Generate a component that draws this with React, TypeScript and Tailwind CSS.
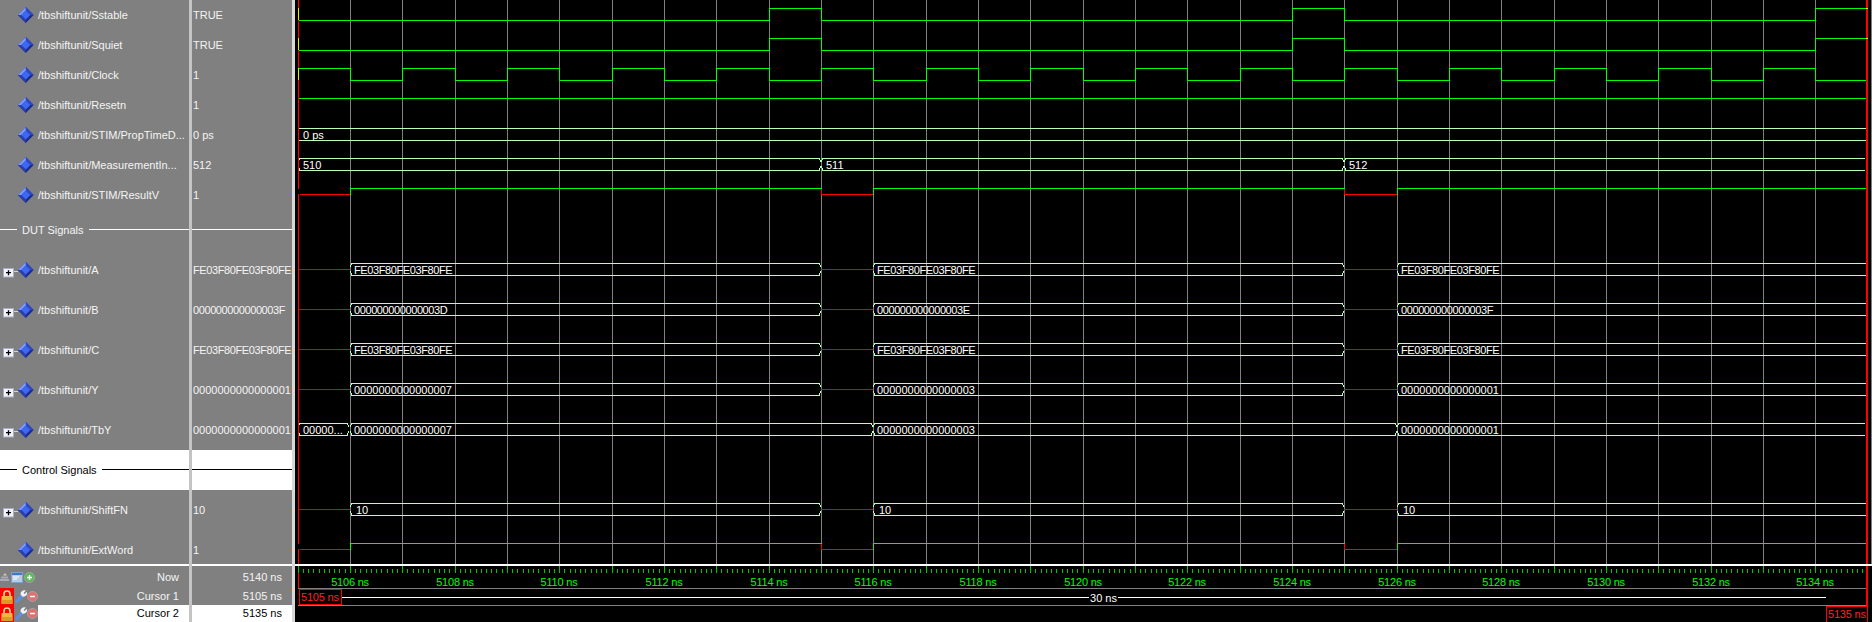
import React from "react";

type Row = { name?: string; value?: string; h: number; expand?: boolean; group?: string; light?: boolean };

const rows: Row[] = [
  { name: "/tbshiftunit/Sstable", value: "TRUE", h: 30 },
  { name: "/tbshiftunit/Squiet", value: "TRUE", h: 30 },
  { name: "/tbshiftunit/Clock", value: "1", h: 30 },
  { name: "/tbshiftunit/Resetn", value: "1", h: 30 },
  { name: "/tbshiftunit/STIM/PropTimeD...", value: "0 ps", h: 30 },
  { name: "/tbshiftunit/MeasurementIn...", value: "512", h: 30 },
  { name: "/tbshiftunit/STIM/ResultV", value: "1", h: 30 },
  { group: "DUT Signals", h: 40 },
  { name: "/tbshiftunit/A", value: "FE03F80FE03F80FE", h: 40, expand: true },
  { name: "/tbshiftunit/B", value: "000000000000003F", h: 40, expand: true },
  { name: "/tbshiftunit/C", value: "FE03F80FE03F80FE", h: 40, expand: true },
  { name: "/tbshiftunit/Y", value: "0000000000000001", h: 40, expand: true },
  { name: "/tbshiftunit/TbY", value: "0000000000000001", h: 40, expand: true },
  { group: "Control Signals", h: 40, light: true },
  { name: "/tbshiftunit/ShiftFN", value: "10", h: 40, expand: true },
  { name: "/tbshiftunit/ExtWord", value: "1", h: 40 },
];

const FONT = "font-['Liberation_Sans',sans-serif] text-[11px] leading-none";

function SignalIcon({ expand }: { expand?: boolean }) {
  return (
    <svg width="36" height="18" viewBox="0 0 36 18" className="shrink-0" shapeRendering="geometricPrecision">
      {expand && (
        <g>
          <path d="M13 10.5h5" stroke="#d4d4d4" />
          <rect x="3.5" y="7.5" width="10" height="8.5" fill="#f2f2fa" stroke="#a9acc8" />
          <path d="M6 11.7h5M8.5 9.3v5" stroke="#000" strokeWidth="1.3" />
        </g>
      )}
      <g transform="translate(0.3 0.5)">
        <polygon points="25.5,0.6 33.4,8.5 25.5,16.4 17.6,8.5" fill="#1c2c8c" />
        <polygon points="25.5,0.6 33.4,8.5 30,8.5 25.5,4" fill="#2f49c0" />
        <polygon points="25.5,0.6 25.5,4 21,8.5 17.6,8.5" fill="#7d9bff" />
        <polygon points="17.6,8.5 21,8.5 25.5,13 25.5,16.4" fill="#2b40b0" />
        <polygon points="25.5,4 30,8.5 25.5,13 21,8.5" fill="#3e68f2" />
      </g>
    </svg>
  );
}

function NameRow({ r }: { r: Row }) {
  if (r.group) {
    return (
      <div className={`flex items-center shrink-0 ${r.light ? "bg-white text-black" : "text-[#f4f4f4]"}`} style={{ height: r.h }}>
        <div className={`w-[17px] h-px mb-px ${r.light ? "bg-black" : "bg-white"}`} />
        <span className="px-[5px] pt-[1px] whitespace-nowrap">{r.group}</span>
        <div className={`flex-1 h-px mb-px ${r.light ? "bg-black" : "bg-white"}`} />
      </div>
    );
  }
  return (
    <div className="flex items-center shrink-0 text-[#f4f4f4]" style={{ height: r.h }}>
      <SignalIcon expand={r.expand} />
      <span className="ml-[2px] pt-[1px] whitespace-nowrap">{r.name}</span>
    </div>
  );
}

function ValueRow({ r }: { r: Row }) {
  if (r.group) {
    return (
      <div className={`flex items-center shrink-0 ${r.light ? "bg-white" : ""}`} style={{ height: r.h }}>
        <div className={`flex-1 h-px mb-px ${r.light ? "bg-black" : "bg-white"}`} />
      </div>
    );
  }
  const hex = /[A-F]/.test(r.value ?? "") && (r.value ?? "").length > 4;
  return (
    <div className="flex items-center shrink-0 pl-[1px] text-[#f4f4f4] whitespace-nowrap" style={{ height: r.h }}>
      <span className={`pt-[1px] ${hex ? "tracking-[-0.4px]" : ""}`}>{r.value}</span>
    </div>
  );
}

function Lock() {
  return (
    <svg width="14" height="16" viewBox="0 0 14 16">
      <path d="M4 8V5a3 3 0 0 1 6 0v3" fill="none" stroke="#f4d9a0" strokeWidth="1.6" />
      <rect x="1.5" y="7" width="11" height="8" rx="1" fill="#f0b840" />
      <rect x="1.5" y="11" width="11" height="4" fill="#d99a28" />
    </svg>
  );
}

function Wrench() {
  return (
    <svg width="12" height="13" viewBox="0 0 12 13">
      <path d="M1.7 11.3 7 6" stroke="#5f8fe0" strokeWidth="3.2" strokeLinecap="round" />
      <path d="M5.6 4.4A3.6 3.6 0 0 1 10.8.6L8.6 3l1 1L12 1.8a3.6 3.6 0 0 1-4.6 4.6z" fill="#eef2fb" />
    </svg>
  );
}

function Circle({ color, plus }: { color: string; plus?: boolean }) {
  return (
    <svg width="11" height="11" viewBox="0 0 11 11">
      <circle cx="5.5" cy="5.5" r="5" fill={color} stroke="#b5b5b5" strokeWidth="0.6" />
      <path d={plus ? "M3 5.5h5M5.5 3v5" : "M3 5.5h5"} stroke="#fff" strokeWidth="1.5" />
    </svg>
  );
}

function NowIcons() {
  return (
    <div className="flex items-center h-full">
      <svg width="10" height="11" viewBox="0 0 10 11">
        <path d="M0 8h9M1 5.5h7" stroke="#a8aab8" strokeWidth="2" />
        <path d="M3 3.5 5 1l2 2.5" fill="#c8c8d0" />
      </svg>
      <svg width="12" height="11" viewBox="0 0 12 11" className="ml-[1px]">
        <rect x="0.5" y="0.5" width="11" height="10" fill="#b6cdea" stroke="#7fa0cc" />
        <rect x="1" y="1" width="10" height="2" fill="#3f78c8" />
        <path d="M2 5h6M2 7h4" stroke="#fff" />
      </svg>
      <div className="ml-[1px] flex"><Circle color="#5fb85f" plus /></div>
    </div>
  );
}

const gx = (n: number) => (n >= 29 ? 1867 : Math.floor(350.45 + 52.33 * n));
const GREEN = "#00ff00";
const BUS = "#b8ffb8";
const RED = "#e80000";

function Line({ x1, y1, x2, y2, c, w = 1 }: { x1: number; y1: number; x2: number; y2: number; c: string; w?: number }) {
  const hx = x1 === x2 ? 0.5 : 0;
  const hy = y1 === y2 ? 0.5 : 0;
  return <line x1={x1 + hx} y1={y1 + hy} x2={x2 + hx} y2={y2 + hy} stroke={c} strokeWidth={w} />;
}

function Bus({ x1, x2, t, label, lx, open }: { x1: number; x2: number; t: number; label?: string; lx?: number; open?: boolean }) {
  const b = t + 12;
  const m = t + 6;
  const hex = label ? /[A-F]/.test(label) : false;
  let d = `M${x1 + 1.5} ${t}V${t + 2}M${x1 + 0.5} ${t + 2}V${t + 4}M${x1 + 1.5} ${b}V${b - 2}M${x1 + 0.5} ${b - 2}V${b - 4}`;
  if (!open) {
    d += `M${x2 - 1.5} ${t}V${t + 2}M${x2 - 0.5} ${t + 2}V${t + 4}M${x2 - 1.5} ${b}V${b - 2}M${x2 - 0.5} ${b - 2}V${b - 4}`;
  }
  return (
    <g>
      <Line x1={x1 + 1} y1={t} x2={x2 - 1} y2={t} c={BUS} />
      <Line x1={x1 + 1} y1={b} x2={x2 - 1} y2={b} c={BUS} />
      <path d={d} stroke={BUS} fill="none" />
      {label && (
        <text
          x={lx ?? x1 + 4}
          y={m + 5}
          fill="#ffffff"
          stroke="none"
          shapeRendering="auto"
          className={hex ? "tracking-[-0.4px]" : ""}
        >
          {label}
        </text>
      )}
    </g>
  );
}

function Waves() {
  const grid = Array.from({ length: 29 }, (_, i) => gx(i));
  const ticks: number[] = [];
  for (let i = 0; i <= 300; i++) {
    const x = 298.1 + i * 5.233;
    if (x < 1866) ticks.push(Math.floor(x));
  }
  const pulse = (hi: number, lo: number) => {
    let d = `M299 ${lo + 0.5}`;
    for (const n of [8, 18, 28]) {
      d += `H${gx(n) + 0.5}V${hi + 0.5}H${gx(n + 1) + 0.5}`;
      if (n < 28) d += `V${lo + 0.5}`;
    }
    return d;
  };
  let clock = `M299 68.5`;
  for (let n = 0; n < 29; n++) {
    const y = n % 2 === 0 ? 80.5 : 68.5;
    clock += `H${gx(n) + 0.5}V${y}`;
  }
  clock += "H1866";

  const segs = [
    [0, 9],
    [10, 19],
    [20, 29],
  ] as const;
  const buses: { t: number; labels: string[] }[] = [
    { t: 263, labels: ["FE03F80FE03F80FE", "FE03F80FE03F80FE", "FE03F80FE03F80FE"] },
    { t: 303, labels: ["000000000000003D", "000000000000003E", "000000000000003F"] },
    { t: 343, labels: ["FE03F80FE03F80FE", "FE03F80FE03F80FE", "FE03F80FE03F80FE"] },
    { t: 383, labels: ["0000000000000007", "0000000000000003", "0000000000000001"] },
    { t: 503, labels: ["10", "10", "10"] },
  ];
  const resultPath = (hi: number, lo: number) =>
    [0, 1, 2].map((k) => {
      const a = k === 0 ? 299 : gx(segs[k - 1][1]);
      const b = gx(segs[k][0]);
      const next = k < 2 ? gx(segs[k][1]) : 1866;
      return (
        <g key={k}>
          <path d={`M${a + 0.5} ${k === 0 ? lo + 0.5 : hi + 0.5}V${lo + 0.5}H${b + 0.5}`} stroke="#ff0000" fill="none" />
          <path d={`M${b + 0.5} ${lo + 0.5}V${hi + 0.5}H${next + 0.5}`} stroke={GREEN} fill="none" />
        </g>
      );
    });

  return (
    <svg
      width="1577"
      height="622"
      viewBox="295 0 1577 622"
      className="shrink-0 bg-black"
      shapeRendering="crispEdges"
    >
      {grid.map((x) => (
        <Line key={x} x1={x} y1={0} x2={x} y2={564} c="#808080" />
      ))}
      <Line x1={1871} y1={0} x2={1871} y2={564} c="#808080" />

      <path d={pulse(8, 20)} stroke={GREEN} fill="none" />
      <path d={pulse(38, 50)} stroke={GREEN} fill="none" />
      <path d={clock} stroke={GREEN} fill="none" />
      <Line x1={299} y1={98} x2={1866} y2={98} c={GREEN} />

      <Line x1={299} y1={128} x2={1866} y2={128} c={BUS} />
      <Line x1={299} y1={140} x2={1866} y2={140} c={BUS} />
      <text x={303} y={139} fill="#fff" shapeRendering="auto">0 ps</text>

      <Bus x1={298} x2={gx(9)} t={158} label="510" lx={303} />
      <Bus x1={gx(9)} x2={gx(19)} t={158} label="511" lx={826} />
      <Bus x1={gx(19)} x2={1866} t={158} label="512" lx={1349} open />

      {resultPath(188, 194)}
      {resultPath(543, 549)}

      {buses.map((b) => (
        <g key={b.t}>
          {segs.map(([s, e], i) => (
            <g key={i}>
              <Bus x1={gx(s)} x2={gx(e)} t={b.t} label={b.labels[i]} lx={gx(s) + (b.t === 503 ? 6 : 4)} open={i === 2} />
              <Line x1={i === 0 ? 299 : gx(segs[i - 1][1])} y1={b.t + 6} x2={gx(s)} y2={b.t + 6} c={RED} />
            </g>
          ))}
        </g>
      ))}

      <Bus x1={298} x2={349} t={423} label="00000..." lx={303} />
      <Bus x1={350} x2={gx(10)} t={423} label="0000000000000007" lx={354} />
      <Bus x1={gx(10)} x2={gx(20)} t={423} label="0000000000000003" lx={gx(10) + 4} />
      <Bus x1={gx(20)} x2={1866} t={423} label="0000000000000001" lx={gx(20) + 4} open />

      {/* cursors */}
      <path d="M298.5 0V8M298.5 20V38M298.5 50V68M298.5 80V189M298.5 194V544M298.5 549V589" stroke="#ff0000" fill="none" />
      <path d="M298.5 8V20M298.5 38V50M298.5 68V80" stroke="#e8e800" fill="none" />
      <rect x={1866} y={0} width={2} height={606} fill="#ff0000" />
      <rect x={1866} y={8} width={2} height={1} fill="#e8e800" />
      <rect x={1866} y={38} width={2} height={1} fill="#e8e800" />

      {/* ruler */}
      <rect x={295} y={564} width={1577} height={2} fill="#ffffff" />
      {ticks.map((x, i) => (
        <Line key={x} x1={x} y1={i % 10 === 0 ? 566 : 569} x2={x} y2={573} c="#00c800" />
      ))}
      {grid
        .filter((_, i) => i % 2 === 0)
        .map((x, i) => (
          <text key={x} x={x} y={586} textAnchor="middle" fill={GREEN} shapeRendering="auto" className="tracking-[-0.2px]">
            {5106 + i * 2} ns
          </text>
        ))}

      <Line x1={298} y1={588} x2={1866} y2={588} c="#808080" />
      <Line x1={298} y1={605} x2={1866} y2={605} c="#808080" />
      <Line x1={342} y1={597} x2={1826} y2={597} c="#ffffff" />
      <rect x={1089} y={592} width={29} height={12} fill="#000" />
      <text x={1103.5} y={602} textAnchor="middle" fill="#fff" shapeRendering="auto">30 ns</text>

      <rect x={299.5} y={589.5} width={42} height={15} fill="#000" stroke="#ff0000" />
      <text x={301} y={601} fill="#ff2020" shapeRendering="auto" className="tracking-[-0.2px]">5105 ns</text>
      <rect x={1826.5} y={606.5} width={41} height={16} fill="#000" stroke="#ff0000" />
      <text x={1828} y={618} fill="#ff2020" shapeRendering="auto" className="tracking-[-0.2px]">5135 ns</text>
    </svg>
  );
}

export default function App() {
  return (
    <div className={`flex w-[1872px] h-[622px] overflow-hidden bg-black ${FONT}`}>
      <div className="w-[189px] shrink-0 flex flex-col bg-[#808080]">
        <div className="h-[564px] overflow-hidden flex flex-col">
          {rows.map((r, i) => (
            <NameRow key={i} r={r} />
          ))}
        </div>
        <div className="h-[2px] bg-white" />
        <div className="h-[22px] flex items-center justify-between pr-[10px] text-[#f4f4f4]">
          <NowIcons />
          <span>Now</span>
        </div>
        <div className="h-[17px] flex items-center justify-between pr-[10px] text-[#f4f4f4]">
          <div className="flex items-center h-full">
            <div className="w-[14px] h-full bg-[#ff0000] flex items-end"><Lock /></div>
            <div className="ml-[1px] flex"><Wrench /></div>
            <div className="flex"><Circle color="#e07070" /></div>
          </div>
          <span>Cursor 1</span>
        </div>
        <div className="h-[17px] flex items-center justify-between pr-[10px] text-black">
          <div className="flex items-center h-full bg-[#808080]">
            <div className="w-[14px] h-full bg-[#ff0000] flex items-end"><Lock /></div>
            <div className="ml-[1px] flex"><Wrench /></div>
            <div className="flex"><Circle color="#e07070" /></div>
          </div>
          <div className="flex-1 h-full bg-white flex items-center justify-end -mr-[10px] pr-[10px]">
            <span>Cursor 2</span>
          </div>
        </div>
      </div>
      <div className="w-[3px] shrink-0 bg-[#c4c4c4]" />
      <div className="w-[100px] shrink-0 flex flex-col bg-[#808080]">
        <div className="h-[564px] overflow-hidden flex flex-col">
          {rows.map((r, i) => (
            <ValueRow key={i} r={r} />
          ))}
        </div>
        <div className="h-[2px] bg-white" />
        <div className="h-[22px] flex items-center justify-end pr-[10px] text-[#f4f4f4]">5140 ns</div>
        <div className="h-[17px] flex items-center justify-end pr-[10px] text-[#f4f4f4]">5105 ns</div>
        <div className="h-[17px] flex items-center justify-end pr-[10px] text-black bg-white">5135 ns</div>
      </div>
      <div className="w-[3px] shrink-0 bg-[#d8d8d8]" />
      <Waves />
    </div>
  );
}
